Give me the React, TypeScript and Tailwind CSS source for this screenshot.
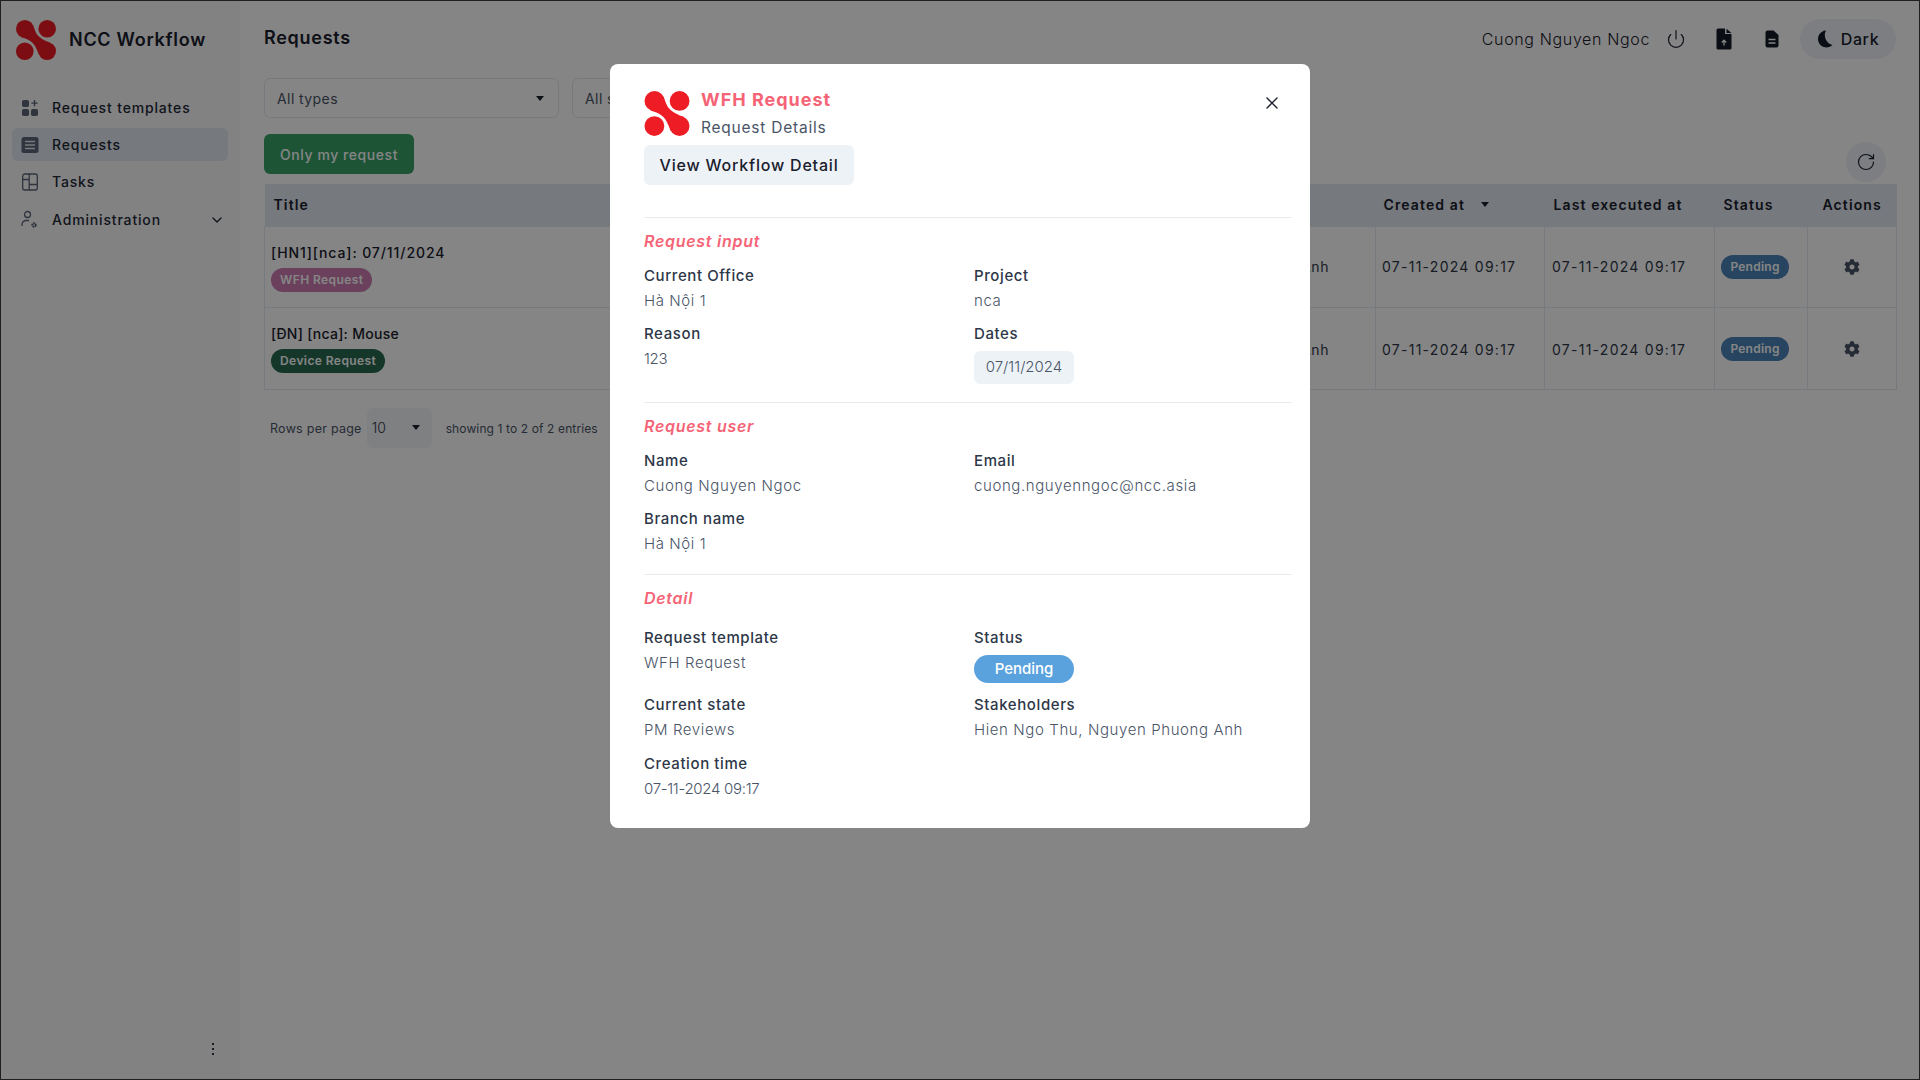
import { ChevronDown, Power, RotateCw, X } from "lucide-react"
import { FaCog } from "react-icons/fa"

const FONT = "font-['Inter','Liberation_Sans',sans-serif]"

function Logo({ className }: { className: string }) {
  return (
    <svg viewBox="0 0 40 40" className={className} fill="#ee1c25">
      <circle cx="8.9" cy="8.9" r="8.9" />
      <circle cx="31.2" cy="8.8" r="8.8" />
      <circle cx="8.8" cy="31.2" r="8.8" />
      <circle cx="31.1" cy="31.1" r="8.9" />
      {/* neck joining top left to bottom right */}
      <path d="M17 5C19 10 19.5 13.5 23.2 16.8C26 19.5 30 21 35 23.2L23.2 35C21 30 19.5 26 16.8 23.2C13.5 19.5 10 19 5 17Z" />
    </svg>
  )
}

function TemplatesIcon() {
  return (
    <svg viewBox="0 0 18 18" className="h-[18px] w-[18px]" fill="#5a6478">
      <rect x="1" y="1" width="7" height="7" rx="1.8" />
      <rect x="1" y="10" width="7" height="7" rx="1.8" />
      <rect x="10" y="10" width="7" height="7" rx="1.8" />
      <path d="M13.5 1v6.2M10.4 4.1h6.2" stroke="#5a6478" strokeWidth="1.4" fill="none" />
    </svg>
  )
}

function RequestsIcon() {
  return (
    <svg viewBox="0 0 18 18" className="h-[18px] w-[18px]">
      <rect x="0.5" y="1" width="17" height="16" rx="2.5" fill="#5a6478" />
      <path d="M4 5.5h10M4 9h10M4 12.5h10" stroke="#e2e8f0" strokeWidth="1.4" />
    </svg>
  )
}

function TasksIcon() {
  return (
    <svg viewBox="0 0 18 18" className="h-[18px] w-[18px]" fill="none" stroke="#5a6478" strokeWidth="1.3">
      <rect x="1.7" y="1" width="14.6" height="16" rx="2" />
      <path d="M8.2 1v16M8.2 6.5H1.7M8.2 11.5h8.1" />
    </svg>
  )
}

function AdminIcon() {
  return (
    <svg viewBox="0 0 18 20" className="h-5 w-[18px]" fill="none" stroke="#5a6478" strokeWidth="1.3">
      <circle cx="6.5" cy="4.5" r="3" />
      <path d="M1 16v-1.5a4 4 0 0 1 4-4h3" />
      <circle cx="13" cy="15" r="1.7" strokeWidth="2" strokeDasharray="1.6 0.5" />
    </svg>
  )
}

function FileUpIcon() {
  return (
    <svg viewBox="0 0 16 22" className="h-[22px] w-4">
      <path d="M2 0.5h7v5.5h6.5v14a1.5 1.5 0 0 1-1.5 1.5H2A1.5 1.5 0 0 1 .5 20V2A1.5 1.5 0 0 1 2 .5z" fill="#141a26" />
      <path d="M10.5 0.8l5 4.2h-5z" fill="#141a26" />
      <path d="M8 17.5v-5M5.8 14.5L8 12.2l2.2 2.3" stroke="#ffffff" strokeWidth="1.3" fill="none" />
    </svg>
  )
}

function FileDocIcon() {
  return (
    <svg viewBox="0 0 14 18" className="h-[18px] w-[14px]">
      <path d="M2.5 0.5h6L13.5 5v10.5a2 2 0 0 1-2 2h-9a2 2 0 0 1-2-2v-13a2 2 0 0 1 2-2z" fill="#141a26" />
      <path d="M3.5 9.5h7M3.5 13h7" stroke="#ffffff" strokeWidth="1.5" />
    </svg>
  )
}

function MoonIcon() {
  return (
    <svg viewBox="0 0 16 18" className="h-[18px] w-4" fill="#141a26">
      <path d="M9 0.5A8.5 8.5 0 1 0 15.5 15 A10 10 0 0 1 9 0.5z" />
    </svg>
  )
}

function Caret() {
  return <span className="h-0 w-0 border-x-[4px] border-t-[5px] border-x-transparent border-t-[#1a202c]" />
}

const NAV = [
  { label: "Request templates", icon: <TemplatesIcon />, box: "h-[33px] mt-[31px]" },
  { label: "Requests", icon: <RequestsIcon />, box: "h-[33px] mt-[4px] bg-[#e2e8f0]" },
  { label: "Tasks", icon: <TasksIcon />, box: "h-[33px] mt-[4px]" },
  { label: "Administration", icon: <AdminIcon />, box: "h-[33px] mt-[5px]" },
]

const ROWS = [
  { title: "[HN1][nca]: 07/11/2024", track: "tracking-[0.065em]", tag: "WFH Request", tagBg: "bg-[#cc7cb0]", h: "h-[81px]", pad: "" },
  { title: "[ĐN] [nca]: Mouse", track: "tracking-[0.02em]", tag: "Device Request", tagBg: "bg-[#2a6a52]", h: "h-[82px]", pad: "pt-[2px]" },
]

function Sidebar() {
  return (
    <aside className="flex w-[239px] shrink-0 flex-col bg-[#f9fafb]">
      <div className="flex items-center pl-[15px] pt-[19px]">
        <Logo className="h-10 w-10" />
        <span className="ml-[13px] pb-[2px] text-[18px] font-semibold tracking-[0.04em] text-[#1a202c]">NCC Workflow</span>
      </div>
      <nav className="flex flex-col pl-[11px] pr-[12px]">
        {NAV.map((item) => (
          <div key={item.label} className={`flex items-center rounded-md pl-[9px] pr-[3px] ${item.box}`}>
            <span className="flex w-[31px] shrink-0 items-center">{item.icon}</span>
            <span className="flex-1 text-[14px] font-medium tracking-[0.06em] text-[#1f2937]">{item.label}</span>
            {item.label === "Administration" && <ChevronDown className="h-4 w-4 text-[#1f2937]" />}
          </div>
        ))}
      </nav>
      <div className="mt-auto flex flex-col items-end gap-[3px] pb-[24px] pr-[26px]">
        <span className="h-[2px] w-[2px] bg-[#2d3748]" />
        <span className="h-[2px] w-[2px] bg-[#2d3748]" />
        <span className="h-[2px] w-[2px] bg-[#2d3748]" />
      </div>
    </aside>
  )
}

function Select({ label, className }: { label: string; className: string }) {
  return (
    <div className={`flex h-10 items-center justify-between rounded-md border border-[#e2e8f0] pl-3 pr-[14px] ${className}`}>
      <span className="text-[14px] tracking-[0.03em] text-[#4a5568]">{label}</span>
      <Caret />
    </div>
  )
}

function Main() {
  return (
    <main className="flex min-w-0 flex-1 flex-col px-6">
      <div className="-mr-[1px] flex h-[77px] items-start justify-between">
        <h1 className="mt-[25px] text-[18px] font-semibold leading-[24px] tracking-[0.04em] text-[#1a202c]">Requests</h1>
        <div className="mt-[18px] flex items-center">
          <span className="text-[16px] font-light tracking-[0.04em] text-[#1a202c]">Cuong Nguyen Ngoc</span>
          <Power className="ml-[16px] h-5 w-5 text-[#1a202c]" strokeWidth={1.4} />
          <span className="ml-[30px] flex w-4 justify-center"><FileUpIcon /></span>
          <span className="ml-[33px] flex w-[14px] justify-center"><FileDocIcon /></span>
          <div className="ml-[21px] flex h-10 w-24 items-center justify-center gap-2 rounded-[20px] bg-[#edf2f7]">
            <MoonIcon />
            <span className="text-[16px] font-medium tracking-[0.04em] text-[#1a202c]">Dark</span>
          </div>
        </div>
      </div>
      <div className="flex gap-[13px]">
        <Select label="All types" className="w-[295px]" />
        <Select label="All status" className="w-[295px]" />
      </div>
      <div className="mt-4 flex h-10 items-start justify-between">
        <button className="h-10 w-[150px] rounded-md bg-[#38a169] text-[14px] font-medium tracking-[0.04em] text-white">Only my request</button>
        <button className="mr-[9px] mt-2 flex h-10 w-10 items-center justify-center rounded-[20px] bg-[#edf2f7]">
          <RotateCw className="h-5 w-5 text-[#1a202c]" strokeWidth={1.4} />
        </button>
      </div>
      <table className="mt-[10px] w-full table-fixed border-collapse">
        <colgroup>
          <col className="w-[440px]" />
          <col className="w-[671px]" />
          <col className="w-[169px]" />
          <col className="w-[170px]" />
          <col className="w-[93px]" />
          <col className="w-[89px]" />
        </colgroup>
        <thead>
          <tr className="h-[42px] bg-[#e2e8f0] text-left text-[14px] font-semibold tracking-[0.08em] text-[#1a202c]">
            <th className="pl-[9px] font-semibold">Title</th>
            <th className="pl-[9px] font-semibold">Stakeholders</th>
            <th className="pl-[8px] font-semibold">
              <span className="flex items-center gap-[16px]">Created at <Caret /></span>
            </th>
            <th className="pl-[9px] font-semibold">Last executed at</th>
            <th className="pl-[9px] font-semibold">Status</th>
            <th className="pl-[15px] font-semibold">Actions</th>
          </tr>
        </thead>
        <tbody>
          {ROWS.map((row) => (
            <tr key={row.title} className={`${row.h} text-[14px] tracking-[0.04em] text-[#2d3748]`}>
              <td className="border border-[#e2e8f0] pl-[6px]">
                <div className={`font-medium text-[#1a202c] ${row.track}`}>{row.title}</div>
                <span className={`mt-[5px] inline-flex h-6 items-center rounded-xl px-[9px] text-[12px] font-semibold tracking-[0.035em] text-white ${row.tagBg}`}>{row.tag}</span>
              </td>
              <td className={`whitespace-nowrap border border-[#e2e8f0] pr-[46px] text-right ${row.pad}`}>Hien Ngo Thu, Nguyen Phuong Anh</td>
              <td className={`border border-[#e2e8f0] pl-[6px] tracking-[0.09em] ${row.pad}`}>07-11-2024 09:17</td>
              <td className={`border border-[#e2e8f0] pl-[7px] tracking-[0.09em] ${row.pad}`}>07-11-2024 09:17</td>
              <td className={`border border-[#e2e8f0] pl-[6px] ${row.pad}`}>
                <span className="inline-flex h-6 w-[68px] items-center justify-center rounded-xl bg-[#4c85b8] text-[12px] font-semibold tracking-[0.02em] text-white">Pending</span>
              </td>
              <td className={`border border-[#e2e8f0] ${row.pad}`}>
                <FaCog className="mx-auto h-4 w-4 text-[#4a5568]" />
              </td>
            </tr>
          ))}
        </tbody>
      </table>
      <div className="mt-[18px] flex items-center pl-[6px]">
        <span className="pt-[3px] text-[12.5px] tracking-[0.02em] text-[#4a5568]">Rows per page</span>
        <div className="ml-[5px] flex h-10 w-[65px] items-center justify-between rounded-md bg-[#f3f5f8] pl-[5px] pr-[12px]">
          <span className="text-[14px] font-light text-[#2d3748]">10</span>
          <Caret />
        </div>
        <span className="ml-[14px] pt-[3px] text-[12px] tracking-[0.01em] text-[#4a5568]">showing 1 to 2 of 2 entries</span>
      </div>
    </main>
  )
}

function Field({ label, value, valueClass = "tracking-[0.04em]", className = "", children }: { label: string; value?: string; valueClass?: string; className?: string; children?: React.ReactNode }) {
  return (
    <div className={className}>
      <div className="h-[21px] text-[15px] font-medium leading-[21px] tracking-[0.04em] text-[#2d3748]">{label}</div>
      {value && <div className={`mt-[4px] h-[22px] text-[15px] font-light leading-[22px] text-[#4a5568] ${valueClass}`}>{value}</div>}
      {children}
    </div>
  )
}

function SectionTitle({ children }: { children: string }) {
  return <div className="h-6 text-[16px] font-semibold italic leading-6 tracking-[0.045em] text-[#f56476]">{children}</div>
}

function RequestModal() {
  return (
    <div className="absolute left-[609px] top-[63px] h-[764px] w-[700px] rounded-lg bg-white pl-[34px] pr-[18px] pt-[27px]">
      <button className="absolute right-[28px] top-[29px]">
        <X className="h-5 w-5 text-[#1a202c]" strokeWidth={1.6} />
      </button>
      <div className="flex h-[45px] items-start">
        <Logo className="h-[45px] w-[46px]" />
        <div className="ml-[11px]">
          <div className="h-[19px] text-[18px] font-bold leading-[18px] tracking-[0.055em] text-[#f56476]">WFH Request</div>
          <div className="mt-[8px] text-[15.5px] leading-[20px] tracking-[0.05em] text-[#4a5568]">Request Details</div>
        </div>
      </div>
      <button className="mt-[9px] h-10 w-[210px] rounded-md bg-[#edf2f7] text-[16px] font-medium tracking-[0.05em] text-[#1a202c]">View Workflow Detail</button>

      <div className="mt-8 border-t border-[#e8ecf1] pt-[11px]">
        <SectionTitle>Request input</SectionTitle>
        <div className="mt-[12px] grid grid-cols-[330px_1fr] gap-y-[11px] pb-[18px]">
          <Field label="Current Office" value="Hà Nội 1" />
          <Field label="Project" value="nca" />
          <Field label="Reason" value="123" valueClass="tracking-[-0.02em]" />
          <Field label="Dates">
            <div className="mt-[7px] flex h-[33px] w-[100px] items-center justify-center rounded-md bg-[#edf2f7] text-[15px] font-light text-[#4a5568]">07/11/2024</div>
          </Field>
        </div>
      </div>

      <div className="border-t border-[#e8ecf1] pt-[11px]">
        <SectionTitle>Request user</SectionTitle>
        <div className="mt-[12px] grid grid-cols-[330px_1fr] gap-y-[11px] pb-[19px]">
          <Field label="Name" value="Cuong Nguyen Ngoc" />
          <Field label="Email" value="cuong.nguyenngoc@ncc.asia" />
          <Field label="Branch name" value="Hà Nội 1" />
        </div>
      </div>

      <div className="border-t border-[#e8ecf1] pt-[11px]">
        <SectionTitle>Detail</SectionTitle>
        <div className="mt-[17px] grid grid-cols-[330px_1fr] gap-y-[11px]">
          <Field label="Request template" value="WFH Request" />
          <Field label="Status">
            <div className="mt-[7px] flex h-7 w-[100px] items-center justify-center rounded-[14px] bg-[#5aa2de] text-[15px] font-medium text-white">Pending</div>
          </Field>
          <Field label="Current state" value="PM Reviews" />
          <Field label="Stakeholders" value="Hien Ngo Thu, Nguyen Phuong Anh" />
          <Field label="Creation time" value="07-11-2024 09:17" valueClass="tracking-[-0.02em]" className="mt-[1px]" />
        </div>
      </div>
    </div>
  )
}

export default function App() {
  return (
    <div className={`relative flex h-screen w-full overflow-hidden border border-[#1f1f1f] bg-white ${FONT}`}>
      <Sidebar />
      <Main />
      <div className="absolute inset-0 bg-black/48" />
      <RequestModal />
    </div>
  )
}
